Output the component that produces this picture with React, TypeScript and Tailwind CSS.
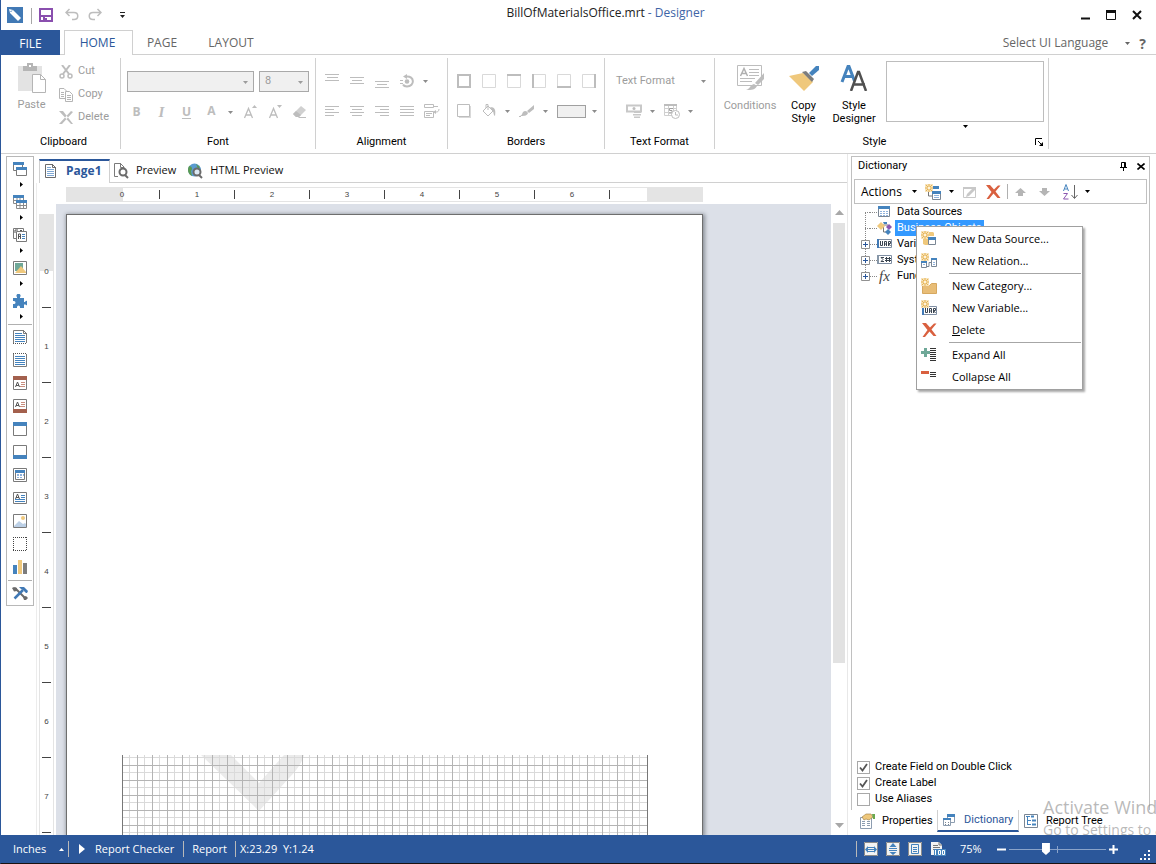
import type { ReactNode } from 'react';
import { useState } from 'react';

type IconProps = {
  w?: number;
  h?: number;
  className?: string;
  children: ReactNode;
};

const Icon = ({ w = 14, h = 14, className = '', children }: IconProps) => (
  <svg width={w} height={h} viewBox={`0 0 ${w} ${h}`} className={`shrink-0 ${className}`} fill="none" aria-hidden="true">
    {children}
  </svg>
);

const Down = ({ className = 'text-[#8c8c8c]' }: { className?: string }) => (
  <Icon w={5} h={3} className={className}>
    <path d="M0 0h5L2.5 3z" fill="currentColor" />
  </Icon>
);

/* ---------- title bar and ribbon tabs ---------- */

const TitleBar = () => (
  <header className="grid h-[30px] shrink-0 grid-cols-[1fr_auto_1fr] items-center pl-[6px] pr-[14px]">
    <div className="flex items-center">
      <Icon w={16} h={16}>
        <path d="M0 0h16v16H0z" fill="#4179b5" />
        <path d="M2 2l4 1 8 8-3 3-8-8z" fill="#fff" />
        <path d="M5 3.500L3.500 5" stroke="#4179b5" />
      </Icon>
      <span className="ml-[8px] mt-[2px] h-[16px] w-px bg-[#a6a6a6]" />
      <button aria-label="Save" className="ml-[7px]">
        <Icon>
          <path d="M1 1h12v12H1z" stroke="#8a4fae" strokeWidth="2" />
          <path d="M2 7h10v2H2zM4 9h2v4H4z" fill="#8a4fae" />
          <path d="M6 10h2v3H6z" fill="#8a4fae" />
        </Icon>
      </button>
      <button aria-label="Undo" className="ml-[12px]">
        <Icon>
          <path d="M1 4.500h8c5 0 5 7 0 7H7M4.500 1L1 4.500 4.500 8" stroke="#bdbdbd" strokeWidth="1.500" />
        </Icon>
      </button>
      <button aria-label="Redo" className="ml-[9px]">
        <Icon>
          <path d="M13 4.500H5c-5 0-5 7 0 7h2M9.500 1L13 4.500 9.500 8" stroke="#bdbdbd" strokeWidth="1.500" />
        </Icon>
      </button>
      <button aria-label="Customize toolbar" className="ml-[18px]">
        <Icon w={5} h={6}>
          <path d="M0 0h5v1H0zM0 3h5L2.500 6z" fill="#222" />
        </Icon>
      </button>
    </div>
    <h1 className="flex pb-[4px] pl-[62px] text-[12px] leading-[18px] whitespace-nowrap text-[#222]">
      BillOfMaterialsOffice.mrt
      <span className="ml-[3px] text-[#3e64a6]">- Designer</span>
    </h1>
    <div className="ml-auto flex items-center gap-[16px]">
      <button aria-label="Minimize">
        <Icon w={10} h={10}>
          <path d="M1 7.500h9v2H1z" fill="#111" />
        </Icon>
      </button>
      <button aria-label="Maximize">
        <Icon w={10} h={10}>
          <path d="M.5.5h9v9h-9z" stroke="#111" />
          <path d="M0 0h10v3H0z" fill="#111" />
        </Icon>
      </button>
      <button aria-label="Close">
        <Icon w={10} h={10}>
          <path d="M1 1l8 8M9 1L1 9" stroke="#111" strokeWidth="2" />
        </Icon>
      </button>
    </div>
  </header>
);

const RibbonTabs = () => (
  <nav className="flex h-[25px] shrink-0 border-b border-[#d0d0d0] text-[12px] text-[#666]">
    <button className="h-[25px] w-[59px] bg-[#2b579a] pt-[2px] text-white">FILE</button>
    <button className="ml-[4px] h-[25px] w-[69px] border border-b-0 border-[#d0d0d0] bg-white pr-[2px] text-[#2b579a]">HOME</button>
    <button className="w-[58px] pt-[2px]">PAGE</button>
    <button className="w-[80px] pt-[2px]">LAYOUT</button>
    <button className="ml-auto flex items-center pt-[2px]">
      <span className="pr-[5px]">Select UI Language</span> <Down className="ml-[12px] text-[#666]" />
    </button>
    <button aria-label="Help" className="ml-[9px] mr-[10px] pt-[2px] text-[14px] font-bold">
      ?
    </button>
  </nav>
);

/* ---------- ribbon ---------- */

type GroupProps = {
  label: string;
  className: string;
  labelClass?: string;
  corner?: ReactNode;
  children: ReactNode;
};

const Group = ({ label, className, labelClass = '', children, corner }: GroupProps) => (
  <section className={`flex h-[91px] shrink-0 flex-col border-r border-[#d0d0d0] ${className}`}>
    <div className="flex-1">{children}</div>
    <div className={`relative flex h-[14px] items-center justify-center text-[11px] text-black ${labelClass}`}>
      {label}
      {corner}
    </div>
  </section>
);

const Tool = ({ label, className = 'w-[25px]', children }: { label: string; className?: string; children: ReactNode }) => (
  <button aria-label={label} className={`flex h-[20px] items-center justify-center text-[#bdbdbd] ${className}`}>
    {children}
  </button>
);

const Lines = ({ d }: { d: string }) => (
  <Icon>
    <path d={d} stroke="currentColor" />
  </Icon>
);

const borderSides = [
  { label: 'All borders', d: 'M1 1h12v12H1z' },
  { label: 'No border', d: '' },
  { label: 'Top border', d: 'M0 1h14' },
  { label: 'Left border', d: 'M1 0v14' },
  { label: 'Bottom border', d: 'M0 13h14' },
  { label: 'Right border', d: 'M13 0v14' },
];

const Letter = ({ mark }: { mark: string }) => (
  <Icon>
    <path d="M1.500 13L5.500 3.500 9.500 13M3 10h5" stroke="currentColor" strokeWidth="1.300" />
    <path d={mark} fill="currentColor" />
  </Icon>
);

const Ribbon = () => (
  <div className="flex h-[99px] shrink-0 border-b border-[#d0d0d0] pt-[3px] font-[Roboto,'Liberation_Sans',sans-serif] text-[11px] text-[#9c9c9c]">
    <Group label="Clipboard" className="w-[120px]" labelClass="pl-[6px]">
      <div className="flex pt-[2px]">
        <button className="flex w-[54px] flex-col items-center gap-[4px] pl-[7px] pt-[3px]">
          <Icon w={28} h={30}>
            <path d="M0 3h24v25H0z" fill="#e3e3e3" />
            <path d="M5 3h4V0h6v3h4v5H5z" fill="#b5b5b5" />
            <path d="M11 2h2v2h-2z" fill="#fff" />
            <path d="M14.500 11.500h8l5 5v13h-13z" fill="#fff" stroke="#b5b5b5" />
            <path d="M22.500 11.500v5h5" stroke="#b5b5b5" />
          </Icon>
          Paste
        </button>
        <div className="flex flex-col pl-[4px]">
          <button className="flex h-[23px] items-center gap-[5px]">
            <Icon>
              <path d="M3 0l7 9M11 0L4 9" stroke="#bdbdbd" strokeWidth="2" />
              <circle cx="3" cy="11" r="2" stroke="#bdbdbd" strokeWidth="1.500" />
              <circle cx="11" cy="11" r="2" stroke="#bdbdbd" strokeWidth="1.500" />
            </Icon>
            Cut
          </button>
          <button className="flex h-[23px] items-center gap-[5px]">
            <Icon>
              <path d="M6 10.500H.5v-10H5L7.500 3M2 4.500h3M2 6.500h3M2 8.500h3" stroke="#b5b5b5" />
              <path d="M6.500 3.500h4l3 3v7h-7zM8 7.500h4M8 9.500h4M8 11.500h4" fill="#fff" stroke="#b5b5b5" />
            </Icon>
            Copy
          </button>
          <button className="flex h-[23px] items-center gap-[5px]">
            <Icon>
              <path d="M0 0h4l10 13h-2zM12 0L0 13l3 0L14 1z" fill="#bdbdbd" />
            </Icon>
            Delete
          </button>
        </div>
      </div>
    </Group>

    <Group label="Font" className="w-[195px]">
      <div className="flex gap-[5px] pl-[6px] pt-[13px]">
        <div className="relative">
          <select aria-label="Font name" className="h-[21px] w-[127px] appearance-none border border-[#a9a9a9] bg-[#f0f0f0]" />
          <Down className="absolute right-[6px] top-[10px]" />
        </div>
        <div className="relative">
          <select aria-label="Font size" className="h-[21px] w-[50px] appearance-none border border-[#a9a9a9] bg-[#f0f0f0] px-[5px] text-[#9c9c9c]">
            <option>8</option>
          </select>
          <Down className="absolute right-[6px] top-[10px]" />
        </div>
      </div>
      <div className="flex pl-[3px] pt-[10px] font-['Open_Sans',sans-serif] text-[12px]">
        <Tool label="Bold"><b>B</b></Tool>
        <Tool label="Italic"><b className="font-['Liberation_Serif',serif] text-[15px] italic">I</b></Tool>
        <Tool label="Underline"><b className="underline underline-offset-2">U</b></Tool>
        <Tool label="Font color"><b className="pb-[3px]">A</b></Tool>
        <Tool label="Font color menu" className="w-[13px]"><Down /></Tool>
        <Tool label="Grow font"><Letter mark="M9 3h5L11.500 0z" /></Tool>
        <Tool label="Shrink font"><Letter mark="M9 0h5L11.500 3z" /></Tool>
        <Tool label="Clear formatting">
          <Icon>
            <path d="M8 1l5 4-7 7H3L0 9z" fill="#d0d0d0" />
            <path d="M0 9l3-3 5 4-2 2H3zM6 12h7v1H5z" fill="#bdbdbd" />
          </Icon>
        </Tool>
      </div>
    </Group>

    <Group label="Alignment" className="w-[132px]">
      <div className="flex pl-[3px] pt-[13px]">
        <Tool label="Align top"><Lines d="M0 .5h14M2 3.500h11M0 6.500h14" /></Tool>
        <Tool label="Align middle"><Lines d="M0 3.500h14M2 6.500h10M0 9.500h14" /></Tool>
        <Tool label="Align bottom"><Lines d="M0 7.500h14M2 10.500h10M0 13.500h14" /></Tool>
        <Tool label="Rotate text">
          <Icon>
            <path d="M6 2.500c9-1 9 10 1 10-3 0-4-2-4-2" stroke="#bdbdbd" strokeWidth="2" />
            <path d="M7 0v5L3 2.500zM0 6h3v1H0zM0 9h3v1H0z" fill="#bdbdbd" />
            <circle cx="7" cy="7.500" r="2.300" fill="#bdbdbd" />
          </Icon>
        </Tool>
        <Tool label="Rotate menu" className="w-[13px]"><Down /></Tool>
      </div>
      <div className="flex pl-[3px] pt-[10px]">
        <Tool label="Align left"><Lines d="M0 2.500h14M0 5.500h9M0 8.500h14M0 11.500h9" /></Tool>
        <Tool label="Align center"><Lines d="M0 2.500h14M2 5.500h10M0 8.500h14M2 11.500h10" /></Tool>
        <Tool label="Align right"><Lines d="M0 2.500h14M5 5.500h9M0 8.500h14M5 11.500h9" /></Tool>
        <Tool label="Justify"><Lines d="M0 2.500h14M0 5.500h14M0 8.500h14M0 11.500h14" /></Tool>
        <Tool label="Word wrap">
          <Icon w={16} h={16}>
            <path d="M.5 1.500h9v3h-9zM.5 8.500h9v6h-9zM2 10.500h6M2 12.500h4M9 3.500h5M15 6c0 3-2 3-4 3" stroke="currentColor" />
            <path d="M9 9l3-2v4z" fill="currentColor" />
          </Icon>
        </Tool>
      </div>
    </Group>

    <Group label="Borders" className="w-[157px]">
      <div className="flex pl-[3px] pt-[13px]">
        {borderSides.map((side) => (
          <Tool key={side.label} label={side.label}>
            <Icon>
              <path d="M.5.5h13v13H.5z" stroke="#d9d9d9" />
              <path d={side.d} stroke="#bdbdbd" strokeWidth="2" />
            </Icon>
          </Tool>
        ))}
      </div>
      <div className="flex pl-[3px] pt-[10px]">
        <Tool label="Shadow">
          <Icon>
            <path d="M2 2h12v12H2z" fill="#d9d9d9" />
            <path d="M.5.5h12v12H.5z" fill="#fff" stroke="#bdbdbd" />
          </Icon>
        </Tool>
        <Tool label="Fill color">
          <Icon>
            <path d="M6 2l5 5-5 5-5-5zM6 6V.5H4V4" stroke="#bdbdbd" />
            <path d="M8 3c5 0 6 3 5 9-2-1-1-5-3-6z" fill="#bdbdbd" />
          </Icon>
        </Tool>
        <Tool label="Fill menu" className="w-[13px]"><Down /></Tool>
        <Tool label="Border color">
          <Icon w={15}>
            <path d="M15 1v4l-5 4-2-2zM4 8c2-2 4-1 5 1-1 3-4 3-8 3 2-1 2-2 3-4z" fill="#bdbdbd" />
            <path d="M0 12h2v1H0z" fill="#bdbdbd" />
          </Icon>
        </Tool>
        <Tool label="Border color menu" className="w-[13px]"><Down /></Tool>
        <Tool label="Border style" className="ml-[5px] w-[29px]">
          <span className="h-[13px] w-[29px] border border-[#a0a0a0] bg-[#f0f0f0]" />
        </Tool>
        <Tool label="Border style menu" className="w-[16px]"><Down /></Tool>
      </div>
    </Group>

    <Group label="Text Format" className="w-[110px]">
      <button className="mt-[13px] flex h-[20px] w-full items-center justify-between pl-[11px] pr-[8px]">
        Text Format <Down />
      </button>
      <div className="flex pl-[16px] pt-[10px]">
        <Tool label="Currency">
          <Icon w={16}>
            <path d="M1 1.500h14v6H1z" stroke="#c8c8c8" strokeWidth="2" />
            <path d="M8 7h7v2H8zM7 10h8v1.500H7zM8 12.500h6V14H8z" fill="#c8c8c8" />
            <circle cx="8" cy="4.500" r="1.500" fill="#bdbdbd" />
          </Icon>
        </Tool>
        <Tool label="Currency menu" className="w-[13px]"><Down /></Tool>
        <Tool label="Date format">
          <Icon w={16} h={16}>
            <path d="M.5 1.500h12v11H.5zM1 5.500h12M1 9.500h10M4.500 2v10M9.500 2v10" stroke="#cfcfcf" />
            <path d="M0 1h13v2H0z" fill="#bdbdbd" />
            <path d="M9 5.500H5.500v2H8v2.500H5" stroke="#a0a0a0" />
            <circle cx="11.500" cy="11.500" r="4" fill="#fff" stroke="#bdbdbd" />
            <path d="M11.500 9v3H14" stroke="#bdbdbd" />
          </Icon>
        </Tool>
        <Tool label="Date format menu" className="w-[13px]"><Down /></Tool>
      </div>
    </Group>

    <Group
      label="Style"
      className="w-[334px]"
      labelClass="pr-[14px]"
      corner={
        <button aria-label="Style settings" className="absolute right-[5px] top-[3px] text-black">
          <Icon w={8} h={8}>
            <path d="M.5 7V.5H7M3 3l3 3" stroke="currentColor" />
            <path d="M8 4v4H4z" fill="currentColor" />
          </Icon>
        </button>
      }
    >
      <div className="flex leading-[13px] text-black">
        <button className="flex w-[66px] flex-col items-center gap-[8px] pl-[4px] pt-[7px] text-[#9c9c9c]">
          <Icon w={27} h={26}>
            <path d="M.5.5h24v20H.5zM12 4.500h10M12 7.500h10M12 10.500h10M3 13.500h15M3 16.500h12" stroke="#bdbdbd" />
            <path d="M3.500 11L7 3.500 10.500 11M5 8.500h4.500" stroke="#b0b0b0" strokeWidth="1.500" />
            <path d="M27 8v6l-6 6-3-2zM17 19l3 2c-2 4-5 4-11 4 4-1 4-5 8-6z" fill="#bdbdbd" />
          </Icon>
          Conditions
        </button>
        <button className="flex w-[45px] flex-col items-center gap-[8px] pt-[7px]">
          <Icon w={30} h={26}>
            <path d="M0 11l14-3 10 9-9 9z" fill="#efc87c" />
            <path d="M13 7l4-1 8 8-2 3z" fill="#7d7d7d" />
            <path d="M20 8l7-7h3v4l-7 6z" fill="#4583bd" />
          </Icon>
          <span>Copy<br />Style</span>
        </button>
        <button className="flex w-[56px] flex-col items-center gap-[8px] pt-[7px]">
          <Icon w={28} h={26}>
            <path d="M2 17L8 1.500h1L14.500 16M3.500 11.500H14" stroke="#4583bd" strokeWidth="3" />
            <path d="M11 26l7-19h1l7 19M13 19.500h12" stroke="#505050" strokeWidth="2.500" />
          </Icon>
          <span>Style<br />Designer</span>
        </button>
        <button aria-label="Style gallery" className="ml-[4px] flex flex-col items-center gap-[3px] pt-[3px]">
          <span className="h-[61px] w-[158px] border border-[#bdbdbd]" />
          <Down className="text-black" />
        </button>
      </div>
    </Group>
  </div>
);

/* ---------- component toolbox ---------- */

const flyouts = [
  {
    label: 'Bands',
    art: (
      <>
        <path d="M.5.5h9v8h-9z" fill="#fff" stroke="#7a7a7a" />
        <path d="M0 0h11v3H0z" fill="#4583bd" />
        <path d="M3.500 5.500h10v8h-10z" fill="#fff" stroke="#7a7a7a" />
        <path d="M3 5h11v3H3z" fill="#4583bd" />
      </>
    ),
  },
  {
    label: 'Cross bands',
    art: (
      <>
        <path d="M.5.5h10v8H.5zM4 3v6M7 3v6M1 5.500h9" fill="#fff" stroke="#8a8a8a" />
        <path d="M0 0h11v3H0z" fill="#4583bd" />
        <path d="M3.500 5.500h10v8h-10zM7 8v6M10.500 8v6M4 10.500h10" fill="#fff" stroke="#8a8a8a" />
        <path d="M3 5h11v3H3z" fill="#4583bd" />
      </>
    ),
  },
  {
    label: 'Components',
    art: (
      <>
        <path d="M.5.5h10v10H.5z" fill="#fff" stroke="#7a7a7a" />
        <path d="M2 5V2h3M7 2.500h2" stroke="#555" />
        <path d="M3.500 3.500h10v10h-10z" fill="#fff" stroke="#7a7a7a" />
        <path d="M5.500 11V6h2v5M5.500 8.500h2" stroke="#555" />
        <path d="M9 6.500h3M9 8.500h3M9 10.500h3" stroke="#4583bd" />
      </>
    ),
  },
  {
    label: 'Pictures',
    art: (
      <>
        <path d="M.5.5h13v13H.5z" fill="#fff" stroke="#7a7a7a" />
        <path d="M2 2h8v8H2z" fill="#6fa898" />
        <path d="M2 12l6-7 5 6v1z" fill="#efc87c" />
      </>
    ),
  },
  {
    label: 'Plugins',
    art: (
      <path
        d="M0 4h4V3a2 2 0 113 0v1h4v4h1a2 2 0 110 2l-1 1v3H7v-1a1.500 1.500 0 00-3 0v1H0v-4h1a1.500 1.500 0 000-3H0z"
        fill="#4583bd"
      />
    ),
  },
];

const tools = [
  {
    label: 'Report title',
    art: (
      <>
        <path d="M.5 13V.5h10l3 3V13" stroke="#7a7a7a" />
        <path d="M10.500 0v3.500H14" stroke="#7a7a7a" />
        <path d="M0 13.500h14" stroke="#555" strokeDasharray="1 1" />
        <path d="M2 3.500h7M2 5.500h10M2 7.500h10M2 9.500h10M2 11.500h10" stroke="#4583bd" />
      </>
    ),
  },
  {
    label: 'Report summary',
    art: (
      <>
        <path d="M.5 1v12.500h13V1" stroke="#7a7a7a" />
        <path d="M0 .5h14" stroke="#555" strokeDasharray="1 1" />
        <path d="M2 3.500h10M2 5.500h10M2 7.500h10M2 9.500h10M2 11.500h10" stroke="#4583bd" />
      </>
    ),
  },
  {
    label: 'Page header',
    art: (
      <>
        <path d="M.5.5h13v13H.5z" fill="#fff" stroke="#7a7a7a" />
        <path d="M0 0h14v4H0z" fill="#a3604d" />
        <path d="M2.500 11l2-5 2 5M3 9.500h3" stroke="#555" />
        <path d="M8 6.500h4M8 8.500h4M7 10.500h5" stroke="#c98e7e" />
      </>
    ),
  },
  {
    label: 'Page footer',
    art: (
      <>
        <path d="M.5.5h13v13H.5z" fill="#fff" stroke="#7a7a7a" />
        <path d="M0 10h14v4H0z" fill="#a3604d" />
        <path d="M2.500 8l2-5 2 5M3 6.500h3" stroke="#555" />
        <path d="M8 3.500h4M8 5.500h4M7 7.500h5" stroke="#c98e7e" />
      </>
    ),
  },
  {
    label: 'Group header',
    art: (
      <>
        <path d="M.5.5h13v13H.5z" fill="#fff" stroke="#7a7a7a" />
        <path d="M0 0h14v4H0z" fill="#4583bd" />
      </>
    ),
  },
  {
    label: 'Group footer',
    art: (
      <>
        <path d="M.5.5h13v13H.5z" fill="#fff" stroke="#7a7a7a" />
        <path d="M0 10h14v4H0z" fill="#4583bd" />
      </>
    ),
  },
  {
    label: 'Data band',
    art: (
      <>
        <path d="M.5.5h13v13H.5zM2.500 5v6.500h9V5" stroke="#7a7a7a" />
        <path d="M2 2h10v3H2z" fill="#4583bd" />
        <path d="M4 6h2v2H4zM7 6h2v2H7zM10 6h1v2h-1zM4 9h2v1H4zM7 9h2v1H7z" fill="#8fb2dc" />
      </>
    ),
  },
  {
    label: 'Text',
    art: (
      <>
        <path d="M.5 1.500h13v11H.5z" stroke="#7a7a7a" />
        <path d="M2.500 8l2-5 2 5M3 6.500h3" stroke="#555" />
        <path d="M8 4.500h4M8 6.500h4M2 8.500h10M2 10.500h10" stroke="#4583bd" />
      </>
    ),
  },
  {
    label: 'Image',
    art: (
      <>
        <path d="M.5.5h13v13H.5z" stroke="#7a7a7a" />
        <path d="M1 12l5-5 4 3 2-1 1 1v3H1z" fill="#bcd0e6" />
        <circle cx="10" cy="4" r="2" fill="#efc87c" />
      </>
    ),
  },
  {
    label: 'Panel',
    art: <path d="M0 .5h14M0 13.500h14M.5 0v14M13.500 0v14" stroke="#444" strokeDasharray="1 1" />,
  },
  {
    label: 'Chart',
    art: (
      <>
        <path d="M0 5h4v9H0z" fill="#4583bd" />
        <path d="M5 0h4v14H5z" fill="#efc87c" />
        <path d="M10 3h4v11h-4z" fill="#7d7d7d" />
      </>
    ),
  },
];

const Toolbox = () => (
  <aside className="ml-[5px] mt-[2px] flex w-[28px] flex-col self-start border border-[#b8b8b8]">
    {flyouts.map((item) => (
      <button key={item.label} aria-label={item.label} className="flex h-[33px] flex-col items-center gap-[6px] pt-[5px]">
        <Icon>{item.art}</Icon>
        <Icon w={3} h={5} className="ml-[3px]">
          <path d="M0 0l3 2.500L0 5z" fill="#000" />
        </Icon>
      </button>
    ))}
    <hr className="mx-[1px] mt-[2px] border-[#b0b0b0]" />
    {tools.map((item) => (
      <button key={item.label} aria-label={item.label} className="flex h-[23px] items-center justify-center">
        <Icon>{item.art}</Icon>
      </button>
    ))}
    <hr className="mx-[1px] mt-[2px] border-[#b0b0b0]" />
    <button aria-label="Designer options" className="flex h-[24px] items-center justify-center">
      <Icon w={16}>
        <path d="M3 2l11 11" stroke="#6b6b6b" strokeWidth="2" />
        <path d="M0 2l2-1 3 1v3L2 5.500zM11 11l3-1 2 2-2 2h-2z" fill="#6b6b6b" />
        <path d="M11 4L2.500 12.500" stroke="#4179b5" strokeWidth="2.500" />
        <path d="M7 1h5l4 4-1 2h-1l-3-3-2-1z" fill="#4179b5" />
      </Icon>
    </button>
  </aside>
);

/* ---------- report canvas ---------- */

const inches = [0, 1, 2, 3, 4, 5, 6];

const PageIcon = () => (
  <Icon w={11}>
    <path d="M.5.5h7l3 3v10H.5z" fill="#fff" stroke="#6b6b6b" />
    <path d="M7.500 0v3.500H11" stroke="#6b6b6b" />
    <path d="M2 3.500h4M2 5.500h7M2 7.500h7M2 9.500h7M2 11.500h7" stroke="#7fa8d4" />
  </Icon>
);

const CanvasTabs = () => (
  <div className="ml-[3px] mt-[5px] flex h-[24px] shrink-0 border-b border-[#d0d0d0] text-[11px] text-[#111]">
    <button className="flex h-[24px] w-[71px] items-center border border-b-0 border-t-2 border-[#d0d0d0] border-t-[#2b579a] bg-white pb-[2px] pl-[5px] text-[12px] font-bold text-[#2b579a]">
      <PageIcon />
      <span className="ml-[10px]">Page1</span>
    </button>
    <button className="ml-[4px] flex items-center gap-[7px]">
      <Icon w={15} h={16}>
        <path d="M4 13.500H.5V.5h6l4 4M6.500 0v4.500H10" stroke="#7a7a7a" />
        <circle cx="9" cy="9" r="3.500" stroke="#6b6b6b" strokeWidth="2" />
        <path d="M11 12l3 3" stroke="#6b6b6b" strokeWidth="2" />
      </Icon>
      Preview
    </button>
    <button className="ml-[12px] flex items-center gap-[7px]">
      <Icon w={15} h={16}>
        <circle cx="6.500" cy="7" r="6.500" fill="#5b9bd0" />
        <path d="M1 3c3 0 4 3 2 5l1 5C0 11-1 7 1 3zM8 1l4 3-2 2z" fill="#5a9a52" />
        <circle cx="9" cy="9" r="3.500" fill="#dbe9f5" stroke="#6b6b6b" strokeWidth="2" />
        <path d="M11 12l3 3" stroke="#6b6b6b" strokeWidth="2" />
      </Icon>
      HTML Preview
    </button>
  </div>
);

const HorizontalRuler = () => (
  <div className="relative ml-[29px] mt-[4px] flex h-[15px] w-[637px] shrink-0">
    <div className="w-[57px] bg-[#e4e4e4]" />
    <div className="flex-1 border-y border-[#e4e4e4] bg-white" />
    <div className="w-[56px] bg-[#e4e4e4]" />
    <div className="absolute inset-y-0 left-[19px] flex items-center">
      {inches.map((n) => (
        <div key={n} className="flex h-[9px] w-[75px] items-center justify-center border-r border-[#444]">
          {n}
        </div>
      ))}
    </div>
  </div>
);

const VerticalRuler = () => (
  <div className="relative ml-[2px] mt-[10px] flex w-[15px] shrink-0 flex-col overflow-hidden">
    <div className="h-[57px] shrink-0 bg-[#e4e4e4]" />
    <div className="flex-1 border-x border-[#e4e4e4] bg-white" />
    <div className="absolute inset-x-0 top-[19px] flex flex-col items-center">
      {[...inches, 7].map((n) => (
        <div key={n} className="flex h-[75px] w-[9px] items-center justify-center border-b border-[#444] pt-[4px]">
          {n}
        </div>
      ))}
    </div>
  </div>
);

const ReportPage = () => (
  <div className="ml-[10px] mt-[10px] flex w-[637px] shrink-0 flex-col border border-b-0 border-[#6e6e6e] bg-white shadow-[1px_1px_4px_1px_#8a8f97]">
    <svg className="ml-[55px] mt-[540px] w-[526px] flex-1" fill="none" role="img" aria-label="Report band">
      <defs>
        <pattern id="cells" width="15" height="15" patternUnits="userSpaceOnUse" y="2">
          <path d="M0 .5h15M7.500 0v15" stroke="#dadada" />
          <path d="M0 8.500h15M.5 0v15" stroke="#b4b4b4" />
        </pattern>
      </defs>
      <path d="M79 0h30l28 28 25-28h20c-2 8-8 16-14 22l-31 34z" fill="#ebebeb" />
      <rect width="526" height="100%" fill="url(#cells)" />
      <path d="M.5 0v400M525.500 0v400" stroke="#777" />
    </svg>
  </div>
);

const Canvas = () => (
  <main className="ml-[2px] flex min-w-0 flex-1 flex-col border-r border-[#e8e8e8]">
    <CanvasTabs />
    <div className="flex min-h-0 flex-1 flex-col border-l border-[#ececec] font-['Liberation_Sans',Arial,sans-serif] text-[8px] leading-none text-[#444]">
      <HorizontalRuler />
      <div className="mt-[2px] flex min-h-0 flex-1">
        <VerticalRuler />
        <div className="ml-[2px] flex min-w-0 flex-1 overflow-hidden bg-[#dce0e8]">
          <ReportPage />
        </div>
        <div className="flex w-[16px] shrink-0 flex-col items-center">
          <button aria-label="Scroll up" className="mt-[6px]">
            <Icon w={9} h={5}><path d="M0 5h9L4.500 0z" fill="#a8a8a8" /></Icon>
          </button>
          <div className="mb-[160px] mt-[8px] w-[12px] flex-1 bg-[#e2e2e2]" />
          <button aria-label="Scroll down" className="mb-[7px]">
            <Icon w={9} h={5}><path d="M0 0h9L4.500 5z" fill="#a8a8a8" /></Icon>
          </button>
        </div>
      </div>
    </div>
  </main>
);

/* ---------- dictionary panel ---------- */

const Spark = () => (
  <>
    <path d="M0 0h8v8H0z" fill="#f7e3bb" />
    <path d="M4 0v8M0 4h8M1 1l6 6M7 1L1 7" stroke="#e6b455" />
    <path d="M3 3h2v2H3z" fill="#fff3d8" />
  </>
);

const DeleteArt = () => <path d="M0 0h4l4 4.500L12 .5h2.500L9.500 6.500l5 6.500-3 0-4-4.500L3 14H.5l5-7z" fill="#d9603f" />;

const VariableArt = () => (
  <>
    <path d="M.5.5h14v8H.5z" fill="#fff" stroke="#7f8ea3" />
    <path d="M0 0h2v9H0z" fill="#4179b5" />
    <path d="M3.500 2v4.500h2V2M7.500 7V2.500h2V7M7.500 5h2M11.500 7V2.500h2v2h-2l2 2.500" stroke="#3a4450" />
  </>
);

const nodes = [
  {
    label: 'Data Sources',
    art: (
      <>
        <path d="M1.500 1.500h11v10h-11z" fill="#fff" stroke="#7a8694" />
        <path d="M1 1h12v3H1z" fill="#4583bd" />
        <path d="M3 6.500h9M3 8.500h9M3 10.500h9" stroke="#8fb2dc" strokeDasharray="2 1" />
      </>
    ),
  },
  {
    label: 'Business Objects',
    selected: true,
    art: (
      <>
        <path d="M4 4h7M6.500 5v6H10" stroke="#777" />
        <path d="M4 1l4 4-4 4-4-4z" fill="#efc87c" />
        <path d="M12 3l3 3-3 3-3-3z" fill="#8a57b0" />
        <path d="M11 8l3 3-3 3-3-3z" fill="#4583bd" />
        <path d="M6 1h4v2H7z" fill="#4583bd" />
      </>
    ),
  },
  { label: 'Variables', expandable: true, art: <g transform="translate(0 2)"><VariableArt /></g> },
  {
    label: 'System Variables',
    expandable: true,
    art: (
      <>
        <path d="M.5 2.500h14v8H.5z" fill="#fff" stroke="#7f8ea3" />
        <path d="M0 2h2v9H0z" fill="#8797a8" />
        <path d="M7 4.500H4l2 2-2 2h3M8 5.500h6M8 7.500h6M9.500 4v5M12.500 4v5" stroke="#3a4450" />
      </>
    ),
  },
  { label: 'Functions', expandable: true, art: null },
];

const Tree = () => (
  <ul className="relative ml-[9px] text-[11px] leading-[16px] text-black">
    <li aria-hidden="true" className="absolute left-[4px] top-[8px] h-[64px] border-l border-dotted border-[#888]" />
    {nodes.map((node) => (
      <li key={node.label} className="relative flex h-[16px] items-center">
        {node.expandable ? (
          <button aria-label={`Expand ${node.label}`}>
            <Icon w={9} h={9}>
              <path d="M.5.5h8v8h-8z" fill="#fff" stroke="#919191" />
              <path d="M2 4.500h5M4.500 2v5" stroke="#2b579a" />
            </Icon>
          </button>
        ) : (
          <span className="ml-[4px] w-[5px] border-t border-dotted border-[#888]" />
        )}
        <span className="w-[7px] border-t border-dotted border-[#888]" />
        {node.art ? (
          <Icon w={15}>{node.art}</Icon>
        ) : (
          <i className="w-[15px] text-center font-['Liberation_Serif',serif] text-[15px] leading-none text-[#444]">fx</i>
        )}
        <span className={node.selected ? 'ml-[3px] bg-[#3399ff] px-[2px] text-white' : 'ml-[3px] px-[2px]'}>{node.label}</span>
      </li>
    ))}
  </ul>
);

const menuGroups = [
  [
    {
      label: 'New Data Source...',
      art: (
        <>
          <path d="M8 1h4l1 1v3H8zM2 8h5v6H4l-2-1z" fill="#efc87c" />
          <Spark />
          <path d="M7.500 7.500h7v6h-7z" fill="#fff" stroke="#7a8694" />
          <path d="M7 6h8v3H7z" fill="#4583bd" />
        </>
      ),
    },
    {
      label: 'New Relation...',
      art: (
        <>
          <path d="M.5 8.500h5v6h-5zM10.500 5.500h5v8h-5zM6 13.500h2v-4h2" fill="#fff" stroke="#7a8694" />
          <path d="M0 8h6v2H0zM10 5h6v2h-6z" fill="#4583bd" />
          <path d="M2 11.500h2M12 9.500h2M12 11.500h2" stroke="#8fb2dc" />
          <Spark />
        </>
      ),
    },
  ],
  [
    {
      label: 'New Category...',
      art: (
        <>
          <path d="M1.500 7.500h7l2-2h5v10h-14z" fill="#e8bd77" stroke="#d6a860" />
          <Spark />
        </>
      ),
    },
    {
      label: 'New Variable...',
      art: (
        <>
          <g transform="translate(1 6)"><VariableArt /></g>
          <Spark />
        </>
      ),
    },
    { label: 'Delete', art: <g transform="translate(1 1)"><DeleteArt /></g> },
  ],
  [
    {
      label: 'Expand All',
      art: (
        <>
          <path d="M3 1h3v3h3v3H6v3H3V7H0V4h3z" fill="#6fa898" />
          <path d="M9 1.500h6M9 3.500h6M9 5.500h6M9 7.500h6M9 9.500h6M9 11.500h6M9 13.500h6" stroke="#333" />
        </>
      ),
    },
    {
      label: 'Collapse All',
      art: (
        <>
          <path d="M0 2h8v3H0z" fill="#d9603f" />
          <path d="M9 3.500h6M9 5.500h6M9 7.500h6" stroke="#333" />
        </>
      ),
    },
  ],
];

const ContextMenu = () => (
  <div
    role="menu"
    className="absolute left-[65px] top-[70px] z-10 w-[167px] border border-[#a0a0a0] bg-white py-[1px] font-['Open_Sans','Noto_Sans',sans-serif] text-[11px] text-black shadow-[2px_2px_2px_#a8a8a8]"
  >
    {menuGroups.map((items, index) => (
      <div key={items[0].label} role="group">
        {index > 0 && <hr className="my-px ml-[32px] mr-px border-[#a6a6a6]" />}
        {items.map((item) => (
          <button key={item.label} role="menuitem" className="flex h-[22px] w-full items-center pl-[4px] text-left">
            <Icon w={16} h={16}>{item.art}</Icon>
            <span className="ml-[15px]">
              {item.label === 'Delete' ? <><u>D</u>elete</> : item.label}
            </span>
          </button>
        ))}
      </div>
    ))}
  </div>
);

const DictionaryToolbar = () => (
  <div className="mx-[2px] mt-[4px] flex h-[25px] shrink-0 items-center border border-[#c0c0c0] pl-[6px] font-['Open_Sans','Noto_Sans',sans-serif] text-[12px] text-black">
    <button className="flex items-center">
      Actions <Down className="ml-[10px] text-black" />
    </button>
    <button aria-label="New item" className="ml-[8px]">
      <Icon w={16} h={16}>
        <path d="M7 2h7v3H7z" fill="#4583bd" />
        <path d="M3.500 8v4H7M7.500 4v4" stroke="#777" />
        <Spark />
        <path d="M7.500 8.500h8v7h-8z" fill="#fff" stroke="#7a8694" />
        <path d="M7 7h9v3H7z" fill="#4583bd" />
        <path d="M9 11.500h5M9 13.500h5" stroke="#8fb2dc" />
      </Icon>
    </button>
    <button aria-label="New item menu" className="ml-[8px]"><Down className="text-black" /></button>
    <button aria-label="Edit" className="ml-[9px]">
      <Icon>
        <path d="M.5 2.500h12v10H.5z" stroke="#c8c8c8" />
        <path d="M0 2h13v2H0z" fill="#c8c8c8" />
        <path d="M3 12l1-3 7-7 2 2-7 7z" fill="#c8c8c8" />
      </Icon>
    </button>
    <button aria-label="Delete item" className="ml-[9px]">
      <Icon w={15}><DeleteArt /></Icon>
    </button>
    <span className="ml-[6px] h-[15px] w-px bg-[#b0b0b0]" />
    <button aria-label="Move up" className="ml-[7px]">
      <Icon w={11} h={8}><path d="M5.500 0L11 5H8v3H3V5H0z" fill="#b5b5b5" /></Icon>
    </button>
    <button aria-label="Move down" className="ml-[13px]">
      <Icon w={11} h={8}><path d="M5.500 8L11 3H8V0H3v3H0z" fill="#b5b5b5" /></Icon>
    </button>
    <button aria-label="Sort" className="ml-[13px]">
      <Icon w={15} h={16}>
        <path d="M.5 7L3 .5 5.500 7M1.500 5h3" stroke="#4583bd" />
        <path d="M.5 9.500h4l-4 5.500h5" stroke="#8a57b0" />
        <path d="M11.500 1v13M8.500 11l3 3.500 3-3.500" stroke="#666" />
      </Icon>
    </button>
    <button aria-label="Sort menu" className="ml-[7px]"><Down className="text-black" /></button>
  </div>
);

const PanelTabs = () => (
  <div className="flex h-[22px] shrink-0 items-center text-[11px] text-black">
    <button className="flex h-full w-[86px] items-center gap-[7px] pl-[8px]">
      <Icon w={16} h={16}>
        <path d="M1.500 4.500h11v11h-11zM3 8.500h3M8 8.500h3M3 10.500h3M8 10.500h3M3 12.500h3M8 12.500h3" fill="#fff" stroke="#8d9db0" />
        <path d="M3 4l4-3h5l2 3-4 3-3-1-2 1z" fill="#efc87c" stroke="#9a7a3c" strokeWidth=".6" />
        <path d="M13 1h3v5h-2z" fill="#6aa84f" />
      </Icon>
      Properties
    </button>
    <button className="flex h-full w-[82px] items-center gap-[9px] border-x border-b-2 border-x-[#d0d0d0] border-b-[#2b579a] pl-[5px] text-[#2b579a]">
      <Icon w={12} h={12}>
        <path d="M4.500 1.500h7v7h-7z" fill="#fff" stroke="#8d9db0" />
        <path d="M4 0h8v3H4z" fill="#4583bd" />
        <path d="M.5 4.500h7v7h-7z" fill="#fff" stroke="#8d9db0" />
        <path d="M0 4h8v2H0z" fill="#4583bd" />
        <path d="M2 8h1v1H2zM5 8h1v1H5zM2 10h1v1H2zM5 10h1v1H5z" fill="#7a8694" />
      </Icon>
      Dictionary
    </button>
    <button className="flex h-full items-center gap-[8px] pl-[5px]">
      <Icon>
        <path d="M.5.5h13v13H.5z" stroke="#7a8694" />
        <path d="M2 2.500h4M3.500 3v8M4 6.500h3M4 10.500h3" stroke="#4583bd" />
        <path d="M8 6.500h4M8 10.500h4M7 2.500h3" stroke="#4583bd" strokeWidth="2" />
      </Icon>
      Report Tree
    </button>
  </div>
);

const DictionaryPanel = () => {
  const [options, setOptions] = useState([
    { label: 'Create Field on Double Click', on: true },
    { label: 'Create Label', on: true },
    { label: 'Use Aliases', on: false },
  ]);

  const toggle = (index: number) =>
    setOptions(options.map((option, i) => (i === index ? { ...option, on: !option.on } : option)));

  return (
    <aside className="relative ml-[3px] mr-[6px] mt-[2px] flex w-[299px] shrink-0 flex-col font-[Roboto,'Liberation_Sans',sans-serif]">
      <div className="flex flex-1 flex-col border border-b-0 border-[#c0c0c0]">
        <div className="flex h-[18px] shrink-0 items-center pl-[6px] pr-[4px] text-[11px] text-black">
          <h2>Dictionary</h2>
          <button aria-label="Pin" className="ml-auto">
            <Icon w={7} h={9}>
              <path d="M1.500 5V.5h4V5M0 5.500h7M3.500 6v3M4.500 0v5" stroke="#000" />
            </Icon>
          </button>
          <button aria-label="Close panel" className="ml-[10px]">
            <Icon w={8} h={7}>
              <path d="M.5.5l7 6M7.500.5l-7 6" stroke="#000" strokeWidth="1.600" />
            </Icon>
          </button>
        </div>
        <DictionaryToolbar />
        <Tree />
        <div className="mt-auto flex flex-col pb-[3px] pl-[5px] text-[11px] text-black">
          {options.map((option, index) => (
            <label key={option.label} className="flex h-[16px] items-center gap-[5px]">
              <span className="relative flex">
                <input
                  type="checkbox"
                  checked={option.on}
                  onChange={() => toggle(index)}
                  className="h-[13px] w-[13px] appearance-none border border-[#a8a8a8] bg-white"
                />
                {option.on && (
                  <Icon w={13} h={13} className="pointer-events-none absolute inset-0">
                    <path d="M3 6.500l2.500 3L10 3" stroke="#555" strokeWidth="1.800" />
                  </Icon>
                )}
              </span>
              {option.label}
            </label>
          ))}
        </div>
      </div>
      <PanelTabs />
      <div className="h-[3px]" />
      <ContextMenu />
    </aside>
  );
};

/* ---------- status bar ---------- */

const Divider = ({ className }: { className: string }) => <span className={`h-[16px] w-px bg-[#b9b9b9] ${className}`} />;

const viewModes = [
  { label: 'Page width', d: 'M4 5.500h6M4 7.500h6M4 9.500h6', fill: 'M1 7.500l3-3.500v7zM13 7.500L10 4v7z' },
  { label: 'Page height', d: 'M3 6.500h8M3 8.500h8', fill: 'M7 1L3.500 5h7zM7 13l-3.500-3h7z' },
  { label: 'One page', d: 'M3.500 2.500h7v9h-7zM5 5.500h4M5 7.500h4M5 9.500h4', fill: '' },
];

const StatusBar = () => (
  <footer className="flex h-[28px] shrink-0 items-center bg-[#2b579a] text-[11px] text-white">
    <button className="ml-[12px] flex w-[51px] items-center justify-between">
      Inches
      <Icon w={5} h={3}><path d="M0 3h5L2.500 0z" fill="#fff" /></Icon>
    </button>
    <Divider className="ml-[4px]" />
    <button className="ml-[10px] flex items-center">
      <Icon w={6} h={10}><path d="M0 0l6 5-6 5z" fill="#fff" /></Icon>
      <span className="ml-[10px]">Report Checker</span>
    </button>
    <Divider className="ml-[9px]" />
    <span className="ml-[8px]">Report</span>
    <Divider className="ml-[8px]" />
    <span className="ml-[4px] whitespace-pre">X:23.29  Y:1.24</span>

    <Divider className="ml-auto" />
    <div className="ml-[7px] flex items-center gap-[8px]">
      {viewModes.map((mode) => (
        <button key={mode.label} aria-label={mode.label}>
          <Icon>
            <path d="M0 0h14v14H0z" fill="#f3f3f3" />
            <path d="M.5.5h13v13H.5z" stroke="#8a8a8a" />
            <path d={mode.d} stroke="#4583bd" />
            <path d={mode.fill} fill="#4583bd" />
          </Icon>
        </button>
      ))}
      <button aria-label="Actual size">
        <Icon w={16} h={16}>
          <path d="M1 1h8l3 3v10H1z" fill="#f3f3f3" />
          <path d="M9 1v3h3M3 4.500h5M3 6.500h7M3 8.500h1" stroke="#777" />
          <path d="M4 8h12v7H4z" fill="#4583bd" />
          <path d="M5.500 9v5M8.500 9.500h2v4h-2zM12.500 9.500h2v4h-2z" stroke="#fff" />
        </Icon>
      </button>
    </div>
    <span className="ml-[14px] w-[24px] text-[11px]">75%</span>
    <button aria-label="Zoom out" className="ml-[13px]">
      <Icon w={9} h={9}><path d="M0 3.500h9v2H0z" fill="#fff" /></Icon>
    </button>
    <input
      type="range"
      aria-label="Zoom"
      min={0}
      max={100}
      defaultValue={37}
      className="ml-[3px] h-[16px] w-[97px] appearance-none bg-[linear-gradient(#8aa3c9,#8aa3c9),linear-gradient(#8aa3c9,#8aa3c9)] bg-[length:100%_1px,1px_7px] bg-center bg-no-repeat [&::-webkit-slider-thumb]:h-[12px] [&::-webkit-slider-thumb]:w-[8px] [&::-webkit-slider-thumb]:appearance-none [&::-webkit-slider-thumb]:bg-white [&::-webkit-slider-thumb]:[clip-path:polygon(0_0,100%_0,100%_70%,50%_100%,0_70%)]"
    />
    <button aria-label="Zoom in" className="ml-[3px]">
      <Icon w={9} h={9}><path d="M0 3.500h9v2H0zM3.500 0h2v9h-2z" fill="#fff" /></Icon>
    </button>
    <Icon w={11} h={11} className="ml-[22px] mr-[5px] mt-[13px]">
      <path d="M8 0h2v2H8zM4 4h2v2H4zM8 4h2v2H8zM0 8h2v2H0zM4 8h2v2H4zM8 8h2v2H8z" fill="#fff" />
    </Icon>
  </footer>
);

export default function App() {
  return (
    <div className="relative flex h-screen flex-col overflow-hidden border-b border-l border-b-[#1a1210] border-l-[#2b579a] bg-white font-['Open_Sans','Noto_Sans',sans-serif]">
      <TitleBar />
      <RibbonTabs />
      <Ribbon />
      <div className="relative flex min-h-0 flex-1 overflow-hidden">
        <Toolbox />
        <Canvas />
        <DictionaryPanel />
        <div className="pointer-events-none absolute bottom-[-5px] right-0 w-[113px] whitespace-nowrap text-[#8a8a8a]/60">
          <p className="text-[18px] leading-[24px]">Activate Windows</p>
          <p className="text-[14px] leading-[21px]">Go to Settings to activate Windows.</p>
        </div>
      </div>
      <StatusBar />
    </div>
  );
}
